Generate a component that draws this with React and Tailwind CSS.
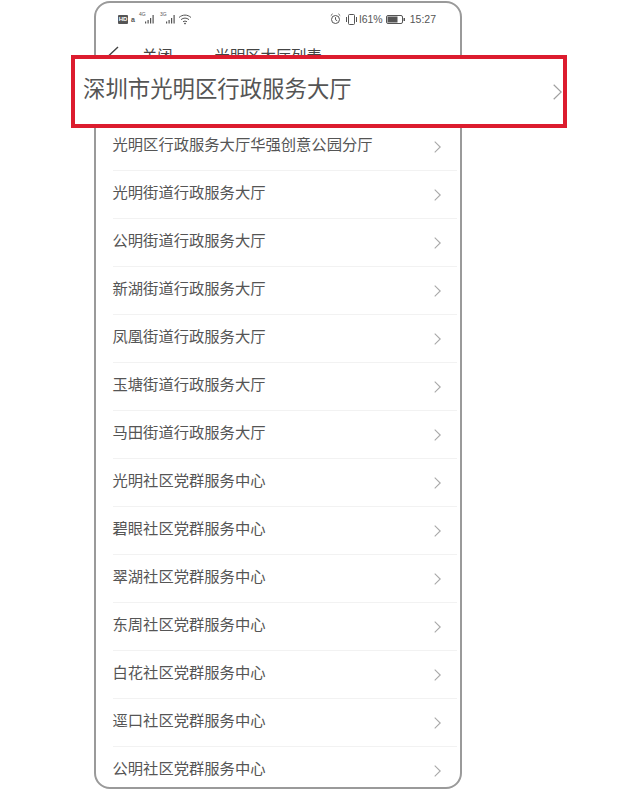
const cjk = { fontFamily: '"Noto Sans CJK SC", "Noto Sans", sans-serif' };

const rows = [
  "光明区行政服务大厅华强创意公园分厅",
  "光明街道行政服务大厅",
  "公明街道行政服务大厅",
  "新湖街道行政服务大厅",
  "凤凰街道行政服务大厅",
  "玉塘街道行政服务大厅",
  "马田街道行政服务大厅",
  "光明社区党群服务中心",
  "碧眼社区党群服务中心",
  "翠湖社区党群服务中心",
  "东周社区党群服务中心",
  "白花社区党群服务中心",
  "逕口社区党群服务中心",
  "公明社区党群服务中心",
];

function Chevron({ w = 7, h = 12, color = "#a8a8a8", sw = 1.1 }) {
  return (
    <svg width={w} height={h} viewBox={`0 0 ${w} ${h}`} fill="none" className="shrink-0">
      <path d={`M0.7 0.7 L${w - 0.8} ${h / 2} L0.7 ${h - 0.7}`} stroke={color} strokeWidth={sw} />
    </svg>
  );
}

function Signal({ label }) {
  return (
    <span className="relative flex items-end w-[18px] h-[10px]">
      <span className="absolute left-0 top-[-2px] text-[5px] leading-[5px] text-[#555]">{label}</span>
      <svg width="18" height="10" viewBox="0 0 18 10">
        <g fill="#555">
          <rect x="6" y="7.5" width="1.2" height="2" />
          <rect x="8.5" y="6" width="1.2" height="3.5" />
          <rect x="11" y="4" width="1.2" height="5.5" />
          <rect x="13.5" y="1" width="1.2" height="8.5" />
        </g>
      </svg>
    </span>
  );
}

function StatusBar() {
  return (
    <div className="flex items-center justify-between h-[30px] pl-[22px] pr-[24px] mt-[1px] text-[#555]" style={{ fontFamily: '"Liberation Sans", sans-serif' }}>
      <div className="flex items-center gap-[3px]">
        <span className="bg-[#555] text-white text-[6px] leading-[9px] h-[9px] w-[10px] rounded-[1px] text-center font-bold">HD</span>
        <span className="text-[7px] leading-[9px] font-bold mr-[1px]">a</span>
        <Signal label="4G" />
        <Signal label="3G" />
        <svg width="14" height="11" viewBox="0 0 14 11" fill="none" stroke="#555" strokeWidth="1" className="-ml-[3px]">
          <path d="M1 3.5 C4.5 0.3 9.5 0.3 13 3.5" />
          <path d="M3 5.7 C5.5 3.6 8.5 3.6 11 5.7" />
          <path d="M5 7.8 C6.2 6.9 7.8 6.9 9 7.8" />
          <circle cx="7" cy="9.6" r="0.5" fill="#555" />
        </svg>
      </div>
      <div className="flex items-center text-[10.5px] leading-none">
        <svg width="11" height="12" viewBox="0 0 11 12" fill="none" stroke="#555" strokeWidth="1" className="mr-[4px]">
          <circle cx="5.5" cy="6.5" r="4" />
          <path d="M5.5 4.2 V6.7 L7.2 7.8 M0.8 2.6 L2.6 0.9 M10.2 2.6 L8.4 0.9" />
        </svg>
        <svg width="13" height="11" viewBox="0 0 13 11" fill="none" stroke="#555" strokeWidth="1" className="mr-[1px]">
          <rect x="3.5" y="0.5" width="6" height="10" rx="1" />
          <path d="M1.5 3 V8 M11.5 3 V8" />
        </svg>
        <span>l61%</span>
        <svg width="20" height="9" viewBox="0 0 20 9" className="ml-[3px] mr-[4px]">
          <rect x="0.5" y="0.5" width="16" height="8" rx="1.5" fill="none" stroke="#555" />
          <rect x="1.5" y="1.5" width="10" height="6" fill="#555" />
          <rect x="17.5" y="3" width="1.5" height="3" fill="#555" />
        </svg>
        <span>15:27</span>
      </div>
    </div>
  );
}

function Row({ text }) {
  return (
    <div className="flex items-center justify-between h-[48px] ml-[17px] mr-[3px] pr-[16px] border-b border-[#f2f2f2] text-[15.3px] leading-none text-[#555]">
      <span className="whitespace-nowrap -translate-y-[3px] -translate-x-[0.5px]">{text}</span>
      <Chevron />
    </div>
  );
}

export default function App() {
  return (
    <div className="relative w-[640px] h-[791px] bg-white overflow-hidden" style={cjk}>
      <div className="absolute left-[94px] top-[1px] w-[368px] h-[788px] border-2 border-[#9a9a9a] rounded-[16px] overflow-hidden bg-white">
        <StatusBar />
        <div className="flex items-center h-[42px] pl-[12px] text-[15.3px] text-[#444] leading-none">
          <svg width="11" height="18" viewBox="0 0 11 18" fill="none" stroke="#444" strokeWidth="1.4" className="shrink-0">
            <path d="M10 1 L1.5 9 L10 17" />
          </svg>
          <span className="ml-[23px]">关闭</span>
          <span className="ml-[42px]">光明区大厅列表</span>
        </div>
        <div className="h-[47px]" />
        <div>
          {rows.map((r) => (
            <Row key={r} text={r} />
          ))}
        </div>
      </div>
      <div className="absolute left-[71px] top-[55px] w-[496px] h-[73px] border-[4px] border-[#dc1c2e] bg-white flex items-center justify-between pl-[8px] pr-[1px]">
        <span className="text-[22.4px] leading-none text-[#555] whitespace-nowrap relative -top-[4px]">深圳市光明区行政服务大厅</span>
        <Chevron w={9} h={16} color="#a0a0a0" sw={1.2} />
      </div>
    </div>
  );
}
